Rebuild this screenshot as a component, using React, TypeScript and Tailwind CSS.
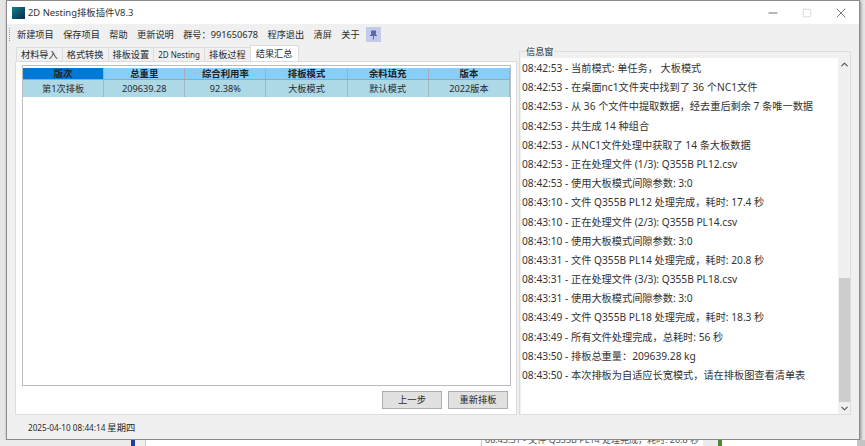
import React from "react";
import { Minus, Square, X, ChevronUp, ChevronDown } from "lucide-react";

const FONT = "font-['Noto_Sans','Noto_Sans_CJK_SC',sans-serif]";

const menuItems = ["新建项目", "保存项目", "帮助", "更新说明", "群号：991650678", "程序退出", "清屏", "关于"];
const tabs = ["材料导入", "格式转换", "排板设置", "2D Nesting", "排板过程"];
const columns = ["版次", "总重里", "综合利用率", "排板模式", "余料填充", "版本"];
const row = ["第1次排板", "209639.28", "92.38%", "大板模式", "默认模式", "2022版本"];

const logs = [
  "08:42:53 - 当前模式: 单任务， 大板模式",
  "08:42:53 - 在桌面nc1文件夹中找到了 36 个NC1文件",
  "08:42:53 - 从 36 个文件中提取数据，经去重后剩余 7 条唯一数据",
  "08:42:53 - 共生成 14 种组合",
  "08:42:53 - 从NC1文件处理中获取了 14 条大板数据",
  "08:42:53 - 正在处理文件 (1/3): Q355B PL12.csv",
  "08:42:53 - 使用大板模式间隙参数: 3:0",
  "08:43:10 - 文件 Q355B PL12 处理完成，耗时: 17.4 秒",
  "08:43:10 - 正在处理文件 (2/3): Q355B PL14.csv",
  "08:43:10 - 使用大板模式间隙参数: 3:0",
  "08:43:31 - 文件 Q355B PL14 处理完成，耗时: 20.8 秒",
  "08:43:31 - 正在处理文件 (3/3): Q355B PL18.csv",
  "08:43:31 - 使用大板模式间隙参数: 3:0",
  "08:43:49 - 文件 Q355B PL18 处理完成，耗时: 18.3 秒",
  "08:43:49 - 所有文件处理完成，总耗时: 56 秒",
  "08:43:50 - 排板总重量：209639.28 kg",
  "08:43:50 - 本次排板为自适应长宽模式，请在排板图查看清单表",
];

const PinIcon = () => (
  <svg width="9" height="10" viewBox="0 0 9 10" fill="none">
    <path d="M2 0.5h5v5h-5z" fill="#5a6aa8" />
    <path d="M1 5.5h7M4.5 5.5v4" stroke="#5a6aa8" strokeWidth="1" />
  </svg>
);

export default function App() {
  return (
    <div className={`${FONT} w-[865px] h-[446px] overflow-hidden bg-[#e6e6e6] flex flex-col text-[#2a2a2a]`}>
      <div className="h-[440px] shrink-0 pl-[6px] pr-[5px]">
        <div className="h-full flex flex-col bg-[#f0f0f0] border border-[#8a8a8a] shadow-[1px_1px_3px_rgba(0,0,0,0.4)]">
          {/* title bar */}
          <div className="h-[23px] shrink-0 bg-white flex items-center pl-[5px] pt-[1px]">
            <div className="w-[13px] h-[12px] bg-gradient-to-br from-[#12808a] to-[#0b2c4a]" />
            <span className="ml-[3px] text-[9.4px] text-[#333] whitespace-nowrap">2D Nesting排板插件V8.3</span>
            <div className="ml-auto flex items-center text-[#333]">
              <div className="w-[34.5px] flex justify-center"><Minus size={14} strokeWidth={1.2} /></div>
              <div className="w-[34.5px] flex justify-center"><Square size={10} strokeWidth={1} className="text-[#aaa]" /></div>
              <div className="w-[34.5px] flex justify-center pr-[1px]"><X size={16} strokeWidth={1} /></div>
            </div>
          </div>
          {/* toolbar */}
          <div className="h-[21px] shrink-0 flex items-center pl-[1px]">
            <div className="h-[13px] w-[3px] ml-[1px] border-l border-dotted border-[#999]" />
            <div className="ml-[5px] flex items-center gap-[9.4px]">
              {menuItems.map((m) => (
                <span key={m} className="whitespace-nowrap text-[9.2px]">{m}</span>
              ))}
              <div className="w-[15px] h-[15px] -ml-[3px] bg-[#c2cbe9] flex items-center justify-center">
                <PinIcon />
              </div>
            </div>
          </div>
          {/* main */}
          <div className="flex-1 min-h-0 flex pl-[8px] pr-[8px] pb-[24px] gap-[2px] relative">
            <div className="w-[502px] shrink-0 flex flex-col">
              <div className="h-[16px] shrink-0 flex items-end pl-[2px]">
                {tabs.map((t) => (
                  <div key={t} className={`h-[14px] px-[4px] flex items-center bg-[#f0f0f0] border border-b-0 border-[#dcdcdc] -ml-px whitespace-nowrap ${t === "2D Nesting" ? "text-[8px]" : "text-[9.2px]"}`}>{t}</div>
                ))}
                <div className="h-[16px] px-[5px] flex items-center bg-white border border-b-0 border-[#dcdcdc] -ml-px text-[9.2px]">结果汇总</div>
              </div>
              <div className="flex-1 min-h-0 bg-white border border-[#dcdcdc] pl-[6px] pr-[5px] pt-[3px] pb-[5px] flex flex-col">
                <div className="flex-1 min-h-0 border border-[#b9bcc6] bg-white">
                  <div className="grid grid-cols-6 h-[12px] mt-[2px] bg-[#87cefa] border-b border-[#9aa] text-[9.4px] font-semibold leading-none text-[#222]">
                    {columns.map((c, i) => (
                      <div key={c} className={`flex items-center justify-center border-r border-[#aab] ${i === 0 ? "bg-[#0078d7]" : ""}`}>{c}</div>
                    ))}
                  </div>
                  <div className="grid grid-cols-6 h-[17px] bg-[#add8e6] text-[9.2px]">
                    {row.map((c) => (
                      <div key={c} className="flex items-center justify-center border-r border-[#9fb8c2]">{c}</div>
                    ))}
                  </div>
                </div>
                <div className="shrink-0 flex justify-end gap-[6px] mt-[5px] mr-[3px]">
                  <div className="w-[60px] h-[18px] bg-[#e1e1e1] border border-[#adadad] flex items-center justify-center text-[9.3px]">上一步</div>
                  <div className="w-[60px] h-[18px] bg-[#e1e1e1] border border-[#adadad] flex items-center justify-center text-[9.3px]">重新排板</div>
                </div>
              </div>
            </div>
            {/* info group */}
            <div className="flex-1 min-w-0 mt-[6px] border border-[#dcdcdc] relative flex pl-[1px] pt-[6px]">
              <span className="absolute -top-[5px] left-[5px] bg-[#f0f0f0] px-[1px] text-[9.2px] leading-none">信息窗</span>
              <div className="flex-1 min-w-0 bg-white pl-[1px] pt-[1px] overflow-hidden">
                {logs.map((l, i) => (
                  <div key={i} className="h-[19.2px] leading-[19.2px] whitespace-nowrap text-[10.2px] text-[#333]">{l}</div>
                ))}
              </div>
              <div className="w-[12px] shrink-0 flex flex-col items-center">
                <ChevronUp size={11} strokeWidth={2.5} className="mt-[1px] text-[#555]" />
                <div className="w-[11px] h-[124px] mt-[208px] bg-[#cdcdcd]" />
                <ChevronDown size={11} strokeWidth={2.5} className="mt-[1px] text-[#555]" />
              </div>
            </div>
            {/* status bar */}
            <div className="absolute left-[21px] bottom-[3px] h-[16px] flex items-center whitespace-nowrap text-[8.2px] gap-[2px]">
              <span>2025-04-10 08:44:14</span>
              <span className="text-[9.3px]">星期四</span>
            </div>
          </div>
        </div>
      </div>
      {/* window behind, showing under the bottom edge */}
      <div className="h-[6px] shrink-0 flex overflow-hidden">
        <div className="w-[131px] shrink-0 bg-[#ececec]" />
        <div className="w-[4px] shrink-0 bg-[#1f3f9a]" />
        <div className="w-[11px] shrink-0 bg-[#f0f0f0] border-r border-[#c8c8c8]" />
        <div className="w-[335px] shrink-0 bg-white" />
        <div className="w-[222px] shrink-0 bg-white border-l border-[#c8c8c8] pl-[3px] text-[9px] leading-none text-[#555] whitespace-nowrap overflow-hidden">
          <div className="-mt-[5px]">08:43:31 - 文件 Q355B PL14 处理完成，耗时: 20.8 秒</div>
        </div>
        <div className="w-[15px] shrink-0 bg-[#ececec]" />
        <div className="w-[4px] shrink-0 bg-[#4d8a2e]" />
        <div className="flex-1 bg-white" />
        <div className="w-[8px] shrink-0 bg-[#c4c4c4]" />
      </div>
    </div>
  );
}
